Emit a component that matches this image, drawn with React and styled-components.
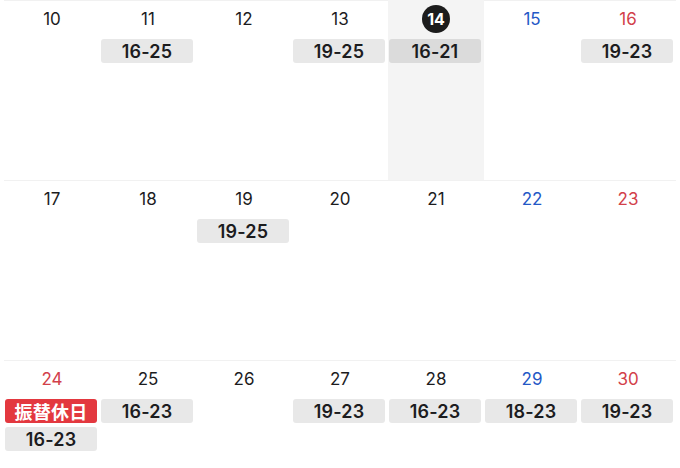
import React from "react";
import styled, { createGlobalStyle } from "styled-components";

const GlobalStyle = createGlobalStyle`
  html, body {
    margin: 0;
    padding: 0;
    background: #ffffff;
  }
  body {
    font-family: Inter, "Noto Sans CJK JP", "Liberation Sans", sans-serif;
    color: #1c1c1e;
  }
`;

// 各週のデータ (kind: weekday / sat / sun)
const weeks = [
  [
    { day: 10 },
    { day: 11, pills: ["16-25"] },
    { day: 12 },
    { day: 13, pills: ["19-25"] },
    { day: 14, today: true, pills: ["16-21"] },
    { day: 15, kind: "sat" },
    { day: 16, kind: "sun", pills: ["19-23"] },
  ],
  [
    { day: 17 },
    { day: 18 },
    { day: 19, pills: ["19-25"] },
    { day: 20 },
    { day: 21 },
    { day: 22, kind: "sat" },
    { day: 23, kind: "sun" },
  ],
  [
    { day: 24, kind: "sun", pills: [{ label: "振替休日", holiday: true }, "16-23"] },
    { day: 25, pills: ["16-23"] },
    { day: 26 },
    { day: 27, pills: ["19-23"] },
    { day: 28, pills: ["16-23"] },
    { day: 29, kind: "sat", pills: ["18-23"] },
    { day: 30, kind: "sun", pills: ["19-23"] },
  ],
];

const numColor = {
  sat: "#2458c6",
  sun: "#d2404a",
};

export default function App() {
  return (
    <>
      <GlobalStyle />
      <Calendar>
        {weeks.map((week, i) => (
          <Week key={i}>
            {week.map((d) => (
              <DayCell key={d.day} $today={d.today}>
                <DayNum>
                  {d.today ? (
                    <TodayBadge>{d.day}</TodayBadge>
                  ) : (
                    <NumText $color={numColor[d.kind]}>{d.day}</NumText>
                  )}
                </DayNum>
                <Pills>
                  {(d.pills || []).map((p, j) => {
                    const label = typeof p === "string" ? p : p.label;
                    const holiday = typeof p !== "string" && p.holiday;
                    return (
                      <Pill key={j} $holiday={holiday} $today={d.today}>
                        {label}
                      </Pill>
                    );
                  })}
                </Pills>
              </DayCell>
            ))}
          </Week>
        ))}
      </Calendar>
    </>
  );
}

const Calendar = styled.div`
  padding: 0 4px;
  width: 680px;
  height: 100vh;
  overflow: hidden;
  box-sizing: border-box;
`;

const Week = styled.div`
  display: grid;
  grid-template-columns: repeat(7, 1fr);
  height: 180px;
  border-top: 1px solid #f1f1f1;
  box-sizing: border-box;
`;

const DayCell = styled.div`
  display: flex;
  flex-direction: column;
  background: ${(p) => (p.$today ? "#f4f4f4" : "transparent")};
  margin-top: -1px;
`;

const DayNum = styled.div`
  height: 37px;
  display: flex;
  align-items: center;
  justify-content: center;
`;

const NumText = styled.span`
  font-size: 17px;
  color: ${(p) => p.$color || "#1c1c1e"};
`;

const TodayBadge = styled.span`
  width: 28px;
  height: 28px;
  border-radius: 50%;
  background: #1c1c1c;
  color: #ffffff;
  font-weight: 700;
  font-size: 16px;
  display: flex;
  align-items: center;
  justify-content: center;
`;

const Pills = styled.div`
  display: flex;
  flex-direction: column;
  gap: 4px;
  padding: 2px 3px 0 1px;
`;

const Pill = styled.div`
  height: 24px;
  border-radius: 3px;
  background: ${(p) =>
    p.$holiday ? "#e3383f" : p.$today ? "#dbdbdb" : "#e8e8e8"};
  color: ${(p) => (p.$holiday ? "#ffffff" : "#1c1c1e")};
  font-size: 18px;
  font-weight: 600;
  letter-spacing: 0.2px;
  display: flex;
  align-items: center;
  justify-content: center;
`;
